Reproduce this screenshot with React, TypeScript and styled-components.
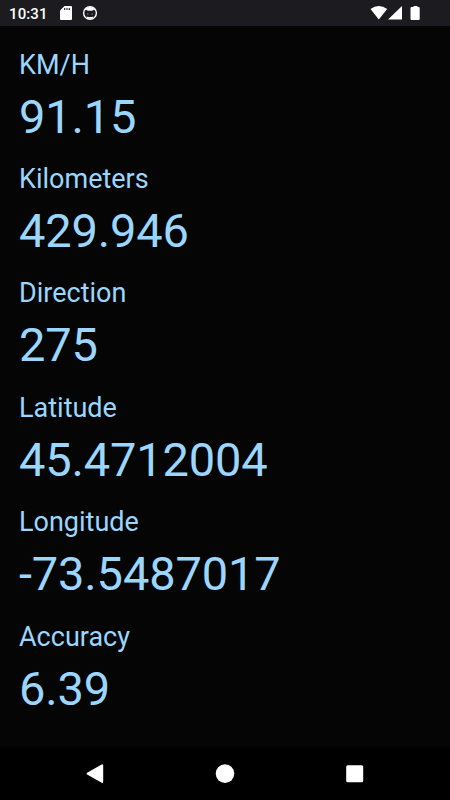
import React from "react";
import styled, { createGlobalStyle } from "styled-components";

const GlobalStyle = createGlobalStyle`
  body { margin: 0; background: #050505; font-family: Roboto, sans-serif; }
`;
const Screen = styled.div`
  display: flex; flex-direction: column; width: 450px; height: 800px; background: #050505; overflow: hidden;
`;
const StatusBar = styled.header`
  display: flex; align-items: center; height: 26px; box-sizing: border-box; padding: 0 30px 0 9px;
  background: #1b1b20; color: #fff;
`;
const Clock = styled.span`
  width: 51px; padding-top: 2px; font-size: 15px; line-height: 24px; font-weight: 500; letter-spacing: 0.1px;
`;
const SystemIcons = styled.div`
  margin-left: auto; display: flex; align-items: center;
`;
const Readings = styled.main`
  flex: 1; padding: 20.6px 19px 0;
`;
const Reading = styled.section`
  height: 114.4px; color: #9bd6ff;
`;
const Label = styled.div`
  font-size: 27px; line-height: 36px;
`;
const Value = styled.div`
  font-size: 47px; line-height: 68px; letter-spacing: -0.15px;
`;
const NavBar = styled.nav`
  height: 53px; background: #000; display: grid; grid-template-columns: repeat(3, 130px);
  justify-content: center; align-items: center; justify-items: center;
`;

const readings = [
  ["KM/H", "91.15"],
  ["Kilometers", "429.946"],
  ["Direction", "275"],
  ["Latitude", "45.4712004"],
  ["Longitude", "-73.5487017"],
  ["Accuracy", "6.39"],
];

export default function App() {
  return (
    <Screen>
      <GlobalStyle />
      <StatusBar>
        <Clock>10:31</Clock>
        <svg width="40" height="26">
          <path d="M4.5 6H11a1 1 0 0 1 1 1v12a1 1 0 0 1-1 1H1a1 1 0 0 1-1-1v-8.5z" fill="#fff" />
          <path d="M4.7 8v2M7 8v2M9.3 8v2" stroke="#1b1b20" strokeWidth="1.1" />
          <circle cx="30" cy="13" r="6.4" fill="none" stroke="#fff" strokeWidth="1.4" />
          <path d="M24.5 10.8Q26 7 30 7t5.5 3.8L33.7 9.8l-1.5 1h-4.4l-1.5-1zM26.5 16.5q3.5 1 7 0l-1.2 2.2h-4.6z" fill="#fff" />
          <path d="M27 14h1.5M31.5 14H33" stroke="#888" />
        </svg>
        <SystemIcons>
          <svg width="50" height="26" fill="#fff">
            <path d="M.5 9Q8.8 3 17.2 9L8.8 19.6zM18 19.5L32 6v13.5zM41.5 7h2V6h4v1h1.2a1 1 0 0 1 1 1V19a1 1 0 0 1-1 1h-7.2a1 1 0 0 1-1-1V8a1 1 0 0 1 1-1z" />
          </svg>
        </SystemIcons>
      </StatusBar>
      <Readings>
        {readings.map(([label, value]) => (
          <Reading key={label}>
            <Label>{label}</Label>
            <Value>{value}</Value>
          </Reading>
        ))}
      </Readings>
      <NavBar>
        <svg width="20" height="20" fill="#fff" stroke="#fff" strokeWidth="2" strokeLinejoin="round"><path d="M2.6 9.7L17.2 1.4V18z" /></svg>
        <svg width="20" height="20" fill="#fff"><circle cx="10" cy="9.6" r="9.3" /></svg>
        <svg width="20" height="20" fill="#fff"><rect x="1.2" y="1.2" width="17" height="17" rx="1.5" /></svg>
      </NavBar>
    </Screen>
  );
}
